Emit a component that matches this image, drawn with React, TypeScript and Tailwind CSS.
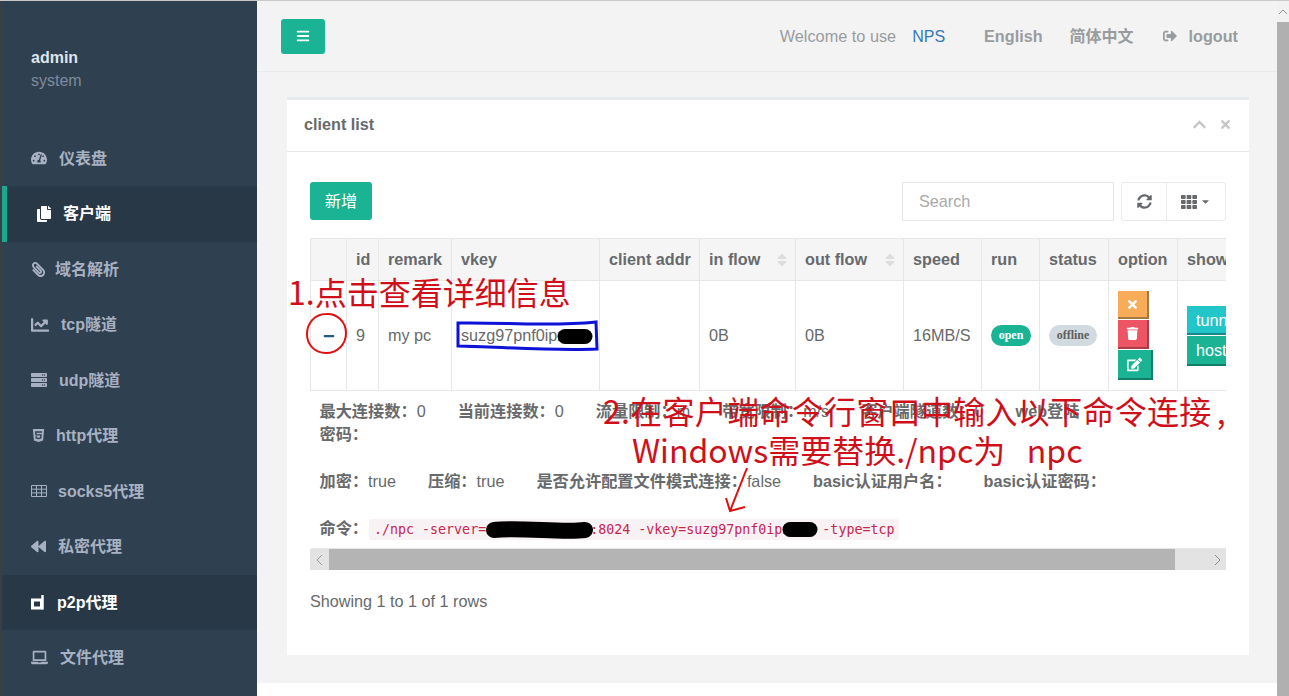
import type { ReactNode } from "react";
import {
  FaBackward,
  FaBars,
  FaChartLine,
  FaChevronUp,
  FaCopy,
  FaEdit,
  FaHtml5,
  FaLaptop,
  FaMinus,
  FaPaperclip,
  FaTrash,
  FaServer,
  FaSignOutAlt,
  FaSort,
  FaSyncAlt,
  FaTachometerAlt,
  FaTh,
  FaTimes,
  FaCaretDown,
} from "react-icons/fa";

function P2pIcon() {
  return (
    <svg width="14" height="16" viewBox="0 0 14 16" fill="none">
      <path d="M1.5 6h9v8h-9z" stroke="currentColor" strokeWidth="3" />
      <path d="M11.500 1v14.500" stroke="currentColor" strokeWidth="2.500" />
    </svg>
  );
}

function GridIcon() {
  return (
    <svg width="16" height="14" viewBox="0 0 16 14" fill="none" stroke="currentColor">
      <path d="M.5 1.500h15v11H.5zM.5 5.200h15M.5 8.900h15M5.500 1.500v11M10.500 1.500v11" />
    </svg>
  );
}

const menu: { label: string; icon: ReactNode; box: string; active?: boolean; bar?: boolean }[] = [
  { label: "仪表盘", icon: <FaTachometerAlt size={16} />, box: "w-[28px]" },
  { label: "客户端", icon: <FaCopy size={16} />, box: "w-[27px] ml-[5px]", active: true, bar: true },
  { label: "域名解析", icon: <FaPaperclip size={15} className="-scale-x-100" />, box: "w-[24px]" },
  { label: "tcp隧道", icon: <FaChartLine size={18} />, box: "w-[30px]" },
  { label: "udp隧道", icon: <FaServer size={16} />, box: "w-[28px]" },
  { label: "http代理", icon: <FaHtml5 size={15} />, box: "w-[25px]" },
  { label: "socks5代理", icon: <GridIcon />, box: "w-[27px]" },
  { label: "私密代理", icon: <FaBackward size={15} />, box: "w-[27px]" },
  { label: "p2p代理", icon: <P2pIcon />, box: "w-[26px]", active: true },
  { label: "文件代理", icon: <FaLaptop size={17} />, box: "w-[29px]" },
];

const th = "border border-[#e7e7e7] px-[9px] text-left font-bold whitespace-nowrap";
const td = "border border-[#e7e7e7] px-[9px] align-middle font-normal";

function Label({ name, value }: { name: string; value?: string }) {
  return (
    <span>
      <b>{name}：</b>
      {value}
    </span>
  );
}

function Sidebar() {
  return (
    <aside className="w-[255px] shrink-0 bg-[#2f4050] text-[#a7b1c2] font-semibold">
      <div className="h-[129.5px] pl-[29px] pt-[45px] leading-[23px]">
        <div className="font-bold text-[#dfe4ed]">admin</div>
        <div className="font-normal text-[#7f8b9c]">system</div>
      </div>
      {menu.map((item) => (
        <div
          key={item.label}
          className={
            "flex h-[55.5px] items-center pl-[29px] " +
            (item.active ? "bg-[#293846] text-white " : "") +
            (item.bar ? "relative" : "")
          }
        >
          {item.bar && <span className="absolute left-0 top-0 h-full w-[5px] bg-[#19aa8d]" />}
          <span className={"shrink-0 " + item.box}>{item.icon}</span>
          <span className="font-bold">{item.label}</span>
        </div>
      ))}
    </aside>
  );
}

function Navbar() {
  return (
    <header className="flex h-[71px] shrink-0 items-center justify-between border-b border-[#e7eaec] pl-6 pr-[39px]">
      <button className="flex h-[35px] w-[44px] items-center justify-center rounded-[3px] bg-[#1ab394] text-white">
        <FaBars size={14} />
      </button>
      <div className="flex items-center text-[#999c9e]">
        <span className="text-[16.300px]">Welcome to use</span>
        <span className="ml-4 text-[#337ab7]">NPS</span>
        <b className="ml-[39px] text-[16.200px]">English</b>
        <b className="ml-[27px]">简体中文</b>
        <FaSignOutAlt size={14} className="ml-[29px]" />
        <b className="ml-[12px] text-[16.200px]">logout</b>
      </div>
    </header>
  );
}

function Toolbar() {
  return (
    <div className="flex items-start justify-between">
      <button className="h-[38px] w-[62px] rounded-[3px] bg-[#1ab394] text-white">新增</button>
      <div className="flex gap-[7px]">
        <div className="flex h-[39px] w-[212px] items-center border border-[#e5e6e7] pl-4 text-[#a9a9a9]">Search</div>
        <div className="flex h-[39px] rounded-[3px] border border-[#e7eaec] text-[#676a6c]">
          <div className="flex w-[45px] items-center justify-center border-r border-[#e7eaec]">
            <FaSyncAlt size={15} />
          </div>
          <div className="flex w-[58px] items-center justify-center gap-[3px]">
            <FaTh size={16} />
            <FaCaretDown size={11} />
          </div>
        </div>
      </div>
    </div>
  );
}

function ClientTable() {
  return (
    <div className="relative mt-[17px] overflow-hidden">
      <table className="w-[950px] table-fixed border-collapse text-[#676a6c]">
        <colgroup>
          <col className="w-[36px]" />
          <col className="w-[32px]" />
          <col className="w-[73px]" />
          <col className="w-[148px]" />
          <col className="w-[100px]" />
          <col className="w-[96px]" />
          <col className="w-[108px]" />
          <col className="w-[78px]" />
          <col className="w-[58px]" />
          <col className="w-[69px]" />
          <col className="w-[69px]" />
          <col className="w-[83px]" />
        </colgroup>
        <thead>
          <tr className="h-[42px] bg-[#f5f5f6]">
            <th className={th}></th>
            <th className={th}>id</th>
            <th className={th}>remark</th>
            <th className={th}>vkey</th>
            <th className={th}>client addr</th>
            <th className={th}>
              <div className="flex items-center justify-between">
                in flow
                <FaSort size={16} className="-mr-1 text-[#dddddd]" />
              </div>
            </th>
            <th className={th}>
              <div className="flex items-center justify-between">
                out flow
                <FaSort size={16} className="-mr-1 text-[#dddddd]" />
              </div>
            </th>
            <th className={th}>speed</th>
            <th className={th}>run</th>
            <th className={th}>status</th>
            <th className={th}>option</th>
            <th className={th}>show</th>
          </tr>
        </thead>
        <tbody>
          <tr className="h-[110px]">
            <td className={td}>
              <FaMinus size={12} className="ml-[3px] text-[#1f5b82]" />
            </td>
            <td className={td}>9</td>
            <td className={td}>my pc</td>
            <td className={td}>suzg97pnf0ipxxxx</td>
            <td className={td}></td>
            <td className={td}>0B</td>
            <td className={td}>0B</td>
            <td className={td}>16MB/S</td>
            <td className={td}>
              <span className="flex h-[21px] w-[40px] items-center justify-center rounded-full bg-[#1ab394] font-['Liberation_Serif',serif] text-[12px] font-bold text-white">
                open
              </span>
            </td>
            <td className={td}>
              <span className="flex h-[21px] w-[48px] items-center justify-center rounded-full bg-[#d1dade] font-['Liberation_Serif',serif] text-[12px] font-bold text-[#5e5e5e]">
                offline
              </span>
            </td>
            <td className={td}>
              <div className="flex flex-col items-start gap-px text-white">
                <span className="flex h-[28px] w-[31px] items-center justify-center border-r-2 border-b-2 border-[#a8763f] bg-[#f8ac59]">
                  <FaTimes size={13} />
                </span>
                <span className="flex h-[29px] w-[31px] items-center justify-center border-r-2 border-b-2 border-[#a83c47] bg-[#ed5565]">
                  <FaTrash size={13} />
                </span>
                <span className="flex h-[30px] w-[35px] items-center justify-center border-r-2 border-b-2 border-[#127d68] bg-[#1ab394]">
                  <FaEdit size={15} />
                </span>
              </div>
            </td>
            <td className={td}>
              <div className="flex flex-col items-start gap-px text-white">
                <span className="h-[29px] w-[62px] border-b-2 border-[#18888a] bg-[#23c6c8] pl-[9px] leading-[28px]">tunnel</span>
                <span className="h-[30px] w-[62px] border-b-2 border-[#127d68] bg-[#1ab394] pl-[9px] leading-[28px]">host</span>
              </div>
            </td>
          </tr>
          <tr className="h-[158px]">
            <td colSpan={12} className="border-y border-[#e7e7e7] pl-[9px] align-top leading-[23.400px]">
              <div className="flex gap-8 whitespace-nowrap pt-[9px]">
                <Label name="最大连接数" value="0" />
                <Label name="当前连接数" value="0" />
                <Label name="流量限制" value="m" />
                <Label name="带宽限制" value="m/s" />
                <Label name="客户端隧道数" value="0" />
                <b>web登陆</b>
              </div>
              <div>
                <b>密码：</b>
              </div>
              <div className="mt-[23.400px] flex gap-8 whitespace-nowrap">
                <Label name="加密" value="true" />
                <Label name="压缩" value="true" />
                <Label name="是否允许配置文件模式连接" value="false" />
                <Label name="basic认证用户名" />
                <Label name="basic认证密码" />
              </div>
              <div className="mt-[23.400px] whitespace-nowrap">
                <b>命令：</b>
                <code className="ml-[1px] rounded-[3px] bg-[#f9f2f4] px-[5px] py-[3px] font-['DejaVu_Sans_Mono',monospace] text-[13.300px] text-[#c7254e]">
                  ./npc -server=xxx.xxx.xx.xx:8024 -vkey=suzg97pnf0ipxxxx -type=tcp
                </code>
              </div>
            </td>
          </tr>
        </tbody>
      </table>
      <div className="flex h-[21px] items-center bg-[#e3e3e3] text-[#8e8e8e]">
        <div className="flex w-[19px] justify-center text-[#9a9a9a]">
          <svg width="7" height="12" viewBox="0 0 7 12" fill="none">
            <path d="M6 1L1 6l5 5" stroke="currentColor" />
          </svg>
        </div>
        <div className="h-full w-[846px] bg-[#b4b4b4]" />
        <div className="flex flex-1 justify-end pr-[5px]">
          <svg width="7" height="12" viewBox="0 0 7 12" fill="none">
            <path d="M1 1l5 5-5 5" stroke="currentColor" />
          </svg>
        </div>
      </div>
      <div className="pointer-events-none absolute left-[293px] top-[152px] whitespace-nowrap font-['Noto_Sans_CJK_SC',sans-serif] text-[32px] leading-[40px] tracking-[0.3px] text-[#cf101a]">
        2.在客户端命令行窗口中输入以下命令连接<span className="ml-[5px]">,</span>
      </div>
      <div className="pointer-events-none absolute left-[322px] top-[191px] whitespace-pre font-['Noto_Sans_CJK_SC',sans-serif] text-[32px] leading-[40px] text-[#cf101a]">
        {"Windows需要替换./npc为   npc"}
      </div>
    </div>
  );
}

function Scribbles() {
  return (
    <svg className="pointer-events-none absolute inset-0 h-full w-full" viewBox="287 100 962 555" fill="none">
      <path
        d="M326 314c11-1 20 8 20 19 0 12-9 20-20 20-11 0-19-8-19-19 0-11 8-20 19-20z"
        stroke="#e01010"
        strokeWidth="2"
      />
      <path d="M458 323c45-1 90 4 138-1l1 27c-45 2-95-2-139-3z" stroke="#0c12d6" strokeWidth="3" />
      <path d="M565 336.500h20" stroke="#000" strokeWidth="15" strokeLinecap="round" />
      <path d="M494 530c25-3 70 3 91 0" stroke="#000" strokeWidth="16" strokeLinecap="round" />
      <path d="M790 529.500h20" stroke="#000" strokeWidth="15" strokeLinecap="round" />
      <path d="M747 468l-17 43M726 498l4 13 15-4" stroke="#e01010" strokeWidth="2" />
    </svg>
  );
}

function Card() {
  return (
    <section className="relative ml-[30px] mt-[25px] h-[558px] w-[962px] border-t-[3px] border-[#e7eaec] bg-white text-[16.200px]">
      <div className="flex h-[52px] items-center justify-between border-b border-[#e7eaec] px-[17px] pb-[2px]">
        <b className="text-[#676a6c]">client list</b>
        <div className="flex items-center gap-[12px] text-[#c4c6c8]">
          <FaChevronUp size={15} />
          <FaTimes size={13} />
        </div>
      </div>
      <div className="px-[23px] pt-[30px]">
        <Toolbar />
        <ClientTable />
        <div className="mt-[20px] text-[#676a6c]">Showing 1 to 1 of 1 rows</div>
      </div>
      <div className="pointer-events-none absolute left-px top-[171px] whitespace-nowrap font-['Noto_Sans_CJK_SC',sans-serif] text-[32px] leading-[40px] text-[#cf101a]">
        1.点击查看详细信息
      </div>
      <Scribbles />
    </section>
  );
}

export default function App() {
  return (
    <div className="flex h-[696px] w-[1289px] overflow-hidden border-t border-[#c9c9c9] bg-white font-['Liberation_Sans','Noto_Sans_CJK_SC',sans-serif] text-[16px] leading-[23px]">
      <div className="w-[2px] shrink-0 bg-[#3a3f44]" />
      <Sidebar />
      <main className="flex w-[1020px] shrink-0 flex-col">
        <div className="h-[682px] bg-[#f3f3f4]">
          <Navbar />
          <Card />
        </div>
      </main>
      <div className="flex flex-1 flex-col bg-[#f1f1f1]">
        <div className="flex h-[21px] items-center justify-center">
          <svg width="10" height="6" viewBox="0 0 10 6" fill="none">
            <path d="M1 5l4-4 4 4" stroke="#8e8e8e" />
          </svg>
        </div>
        <div className="flex-1 bg-[#b0b0b0]" />
      </div>
    </div>
  );
}
